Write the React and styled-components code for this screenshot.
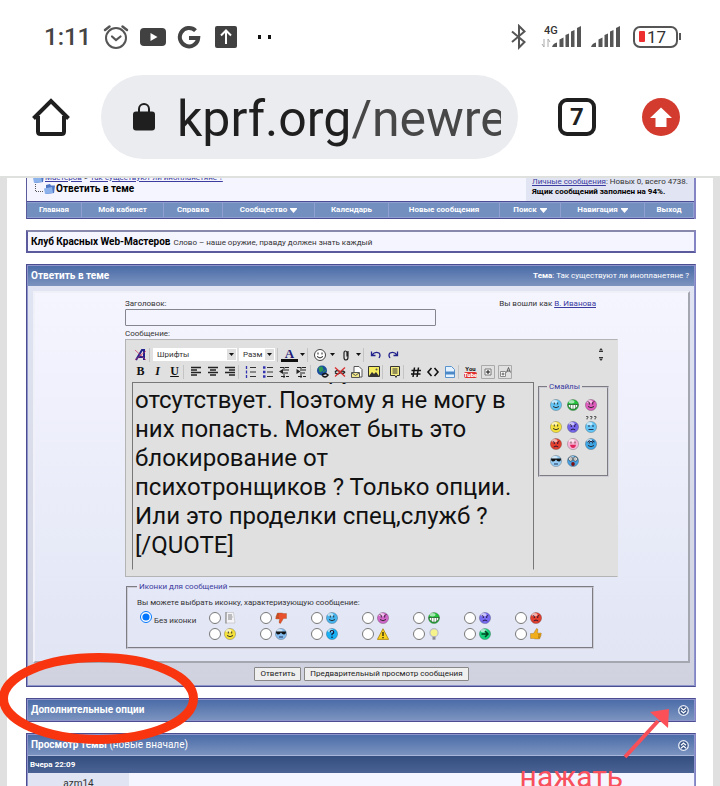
import React, { useEffect, useRef } from 'react';
import styled, { createGlobalStyle } from 'styled-components';

const smileys = [
    { color: '#62c4f4', face: 'smile' },
    { color: '#22c03a', face: 'grin' },
    { color: '#dd5cbc', face: 'evil' },
    { color: '#f4e03c', face: 'smile' },
    { color: '#7466ea', face: 'angry' },
    { color: '#62c4f4', face: 'flat', confused: true },
    { color: '#e2402f', face: 'angry' },
    { color: '#f7b4d6', face: 'laugh' },
    { color: '#3fa6e6', face: 'roll' },
    { color: '#94ccf4', face: 'cool' },
    { color: '#48a0e0', face: 'shock' },
];

const postIcons = [
    { id: 'note', icon: <NoteIcon /> },
    { id: 'down', icon: <ThumbIcon color="#e8502e" down /> },
    { id: 'smile', icon: <Smiley color="#48b4ee" face="wink" /> },
    { id: 'evil', icon: <Smiley color="#cf66c8" face="evil" /> },
    { id: 'grin', icon: <Smiley color="#22c03a" face="grin" /> },
    { id: 'sad', icon: <Smiley color="#786cf2" face="angry" /> },
    { id: 'angry', icon: <Smiley color="#e2402f" face="angry" /> },
    { id: 'yellow', icon: <Smiley color="#f4e03c" face="smile" /> },
    { id: 'cool', icon: <Smiley color="#84bcf0" face="cool" /> },
    { id: 'question', icon: <Smiley color="#18b0f4" face="question" /> },
    { id: 'warning', icon: <WarningIcon /> },
    { id: 'idea', icon: <BulbIcon /> },
    { id: 'arrow', icon: <Smiley color="#17d07c" face="arrow" /> },
    { id: 'up', icon: <ThumbIcon color="#f0ae1c" /> },
];

const navItems = [
    { label: 'Главная' },
    { label: 'Мой кабинет' },
    { label: 'Справка' },
    { label: 'Сообщество', menu: true },
    { label: 'Календарь' },
    { label: 'Новые сообщения' },
    { label: 'Поиск', menu: true },
    { label: 'Навигация', menu: true },
    { label: 'Выход' },
];

const message = [
    '\u00a0'.repeat(30) + 'друг',
    'отсутствует. Поэтому я не могу в',
    'них попасть. Может быть это',
    'блокирование от',
    'психотронщиков ? Только опции.',
    'Или это проделки спец,служб ?',
    '[/QUOTE]',
].join('\n');

const App = () => {
    return (
        <StyledScreen>
            <GlobalStyle />
            <StatusBar />
            <BrowserBar />
            <StyledPage>
                <Breadcrumbs />
                <StyledClubBox>
                    <strong>Клуб Красных Web-Мастеров</strong>
                    <span>Слово – наше оружие, правду должен знать каждый</span>
                </StyledClubBox>
                <ReplyForm />
                <StyledPanel>
                    <StyledPanelHeader>
                        <strong>Дополнительные опции</strong>
                        <StyledRoundButton type="button" aria-label="Развернуть">
                            <CollapseIcon />
                        </StyledRoundButton>
                    </StyledPanelHeader>
                </StyledPanel>
                <StyledPanel>
                    <StyledPanelHeader>
                        <span>
                            <strong>Просмотр темы</strong> (новые вначале)
                        </span>
                        <StyledRoundButton type="button" aria-label="Свернуть">
                            <CollapseIcon up />
                        </StyledRoundButton>
                    </StyledPanelHeader>
                    <StyledPostDate>Вчера 22:09</StyledPostDate>
                    <StyledPost>
                        <StyledPostAuthor>azm14</StyledPostAuthor>
                    </StyledPost>
                </StyledPanel>
            </StyledPage>
            <Annotations />
        </StyledScreen>
    );
};

export default App;

function StatusBar() {
    return (
        <StyledStatusBar>
            <StyledClock>1:11</StyledClock>
            <StyledStatusIcons>
                <svg width="26" height="26" viewBox="0 0 26 26" fill="none" stroke="#555" strokeLinecap="round">
                    <circle cx="13" cy="14" r="10" strokeWidth="2" />
                    <path d="M2 6 6.500 2.500M24 6 19.500 2.500" strokeWidth="2.500" />
                    <path d="M9 12.500 13 16l4.500-3.500" strokeWidth="2.200" />
                </svg>
                <svg width="28" height="20" viewBox="0 0 28 20">
                    <rect x="1" y="1" width="26" height="18" rx="4" fill="#414141" />
                    <path d="m11.500 6 7 4-7 4z" fill="#fff" />
                </svg>
                <svg width="24" height="24" viewBox="0 0 24 24" fill="none" stroke="#444" strokeWidth="4">
                    <path d="M18.500 5.600A9.200 9.200 0 1 0 21.200 13H12" />
                </svg>
                <StyledUploadIcon width="22" height="22" viewBox="0 0 22 22">
                    <rect width="22" height="22" rx="2" fill="#414141" />
                    <path d="M11 18V5M6 9.500 11 4.500l5 5" fill="none" stroke="#fff" strokeWidth="2" />
                </StyledUploadIcon>
                <svg width="16" height="6" viewBox="0 0 16 6">
                    <path d="M1 1h3v4H1zM11 1h3v4h-3z" fill="#111" />
                </svg>
            </StyledStatusIcons>
            <StyledStatusRight>
                <svg width="18" height="26" viewBox="0 0 18 26" fill="none" stroke="#555" strokeWidth="2">
                    <path d="m2 7.500 12.500 10.500L9 23.500V2l5.500 5.500L2 18" />
                </svg>
                <StyledNetwork>
                    <span>4G</span>
                    <svg width="10" height="12" viewBox="0 0 10 12">
                        <path d="M3 10V2M1 7l2 3M7 2v8M7 2l2 3" stroke="#aaa" fill="none" />
                    </svg>
                </StyledNetwork>
                <SignalIcon />
                <SignalIcon />
                <StyledBattery>17</StyledBattery>
            </StyledStatusRight>
        </StyledStatusBar>
    );
}

function SignalIcon() {
    return (
        <svg width="30" height="22" viewBox="0 0 30 22" fill="#555">
            <path d="M0 21c1-3 3-4 5-4.500V21zM7.500 13.500l4-2V21h-4zM13.500 9l3.500-1.500V21h-3.500zM19 5.500 22.500 4v17H19zM25 2l4-2v21h-4z" />
        </svg>
    );
}

function BrowserBar() {
    return (
        <StyledBrowserBar>
            <StyledBarButton type="button" aria-label="Домой">
                <svg width="38" height="38" viewBox="0 0 38 38" fill="none" stroke="#1f1f1f" strokeWidth="4">
                    <path d="M1.500 20.500 19 3l17.500 17.500M6 18v15.500q0 2.500 2.500 2.500h21q2.500 0 2.500-2.500V18" />
                </svg>
            </StyledBarButton>
            <StyledAddress type="button">
                <svg width="22" height="28" viewBox="0 0 22 28">
                    <path d="M6 10V6a5 5 0 0 1 10 0v4" fill="none" stroke="#1f1f1f" strokeWidth="2" />
                    <rect x="0" y="8.500" width="22" height="19" rx="3" fill="#1f1f1f" />
                </svg>
                <StyledUrl>
                    kprf.org<span>/newre</span>
                </StyledUrl>
            </StyledAddress>
            <StyledTabs type="button">7</StyledTabs>
            <StyledBarButton type="button" aria-label="Обновить">
                <svg width="38" height="38" viewBox="0 0 38 38">
                    <circle cx="19" cy="19" r="19" fill="#d33b2e" />
                    <path d="M19 9.500 30 20h-5.500v9h-11v-9H8z" fill="#fff" />
                </svg>
            </StyledBarButton>
        </StyledBrowserBar>
    );
}

function Breadcrumbs() {
    return (
        <StyledCrumbBox>
            <StyledCrumbRow>
                <StyledCrumbs>
                    <StyledCrumbLine>
                        <FolderIcon />
                        <span>
                            <a href="#masters">Мастеров</a> &gt; <a href="#thread">Так существуют ли инопланетяне ?</a>
                        </span>
                    </StyledCrumbLine>
                    <StyledCrumbLine $current>
                        <svg width="8" height="10" viewBox="0 0 8 10" fill="none" stroke="#555" strokeDasharray="1 1">
                            <path d="M.5 0v7.500H8" />
                        </svg>
                        <FolderIcon />
                        <strong>Ответить в теме</strong>
                    </StyledCrumbLine>
                </StyledCrumbs>
                <StyledInbox>
                    <div>
                        <a href="#pm">Личные сообщения</a>: Новых 0, всего 4738.
                    </div>
                    <strong>Ящик сообщений заполнен на 94%.</strong>
                </StyledInbox>
            </StyledCrumbRow>
            <StyledNav>
                {navItems.map((item) => (
                    <StyledNavLink key={item.label} href="#nav">
                        {item.label}
                        {item.menu && (
                            <svg width="7" height="5" viewBox="0 0 7 5">
                                <path d="M0 0h7v1L3.500 5 0 1z" fill="#fff" />
                            </svg>
                        )}
                    </StyledNavLink>
                ))}
            </StyledNav>
        </StyledCrumbBox>
    );
}

function ReplyForm() {
    return (
        <StyledPanel>
            <StyledPanelHeader>
                <strong>Ответить в теме</strong>
                <StyledTopic>
                    <b>Тема</b>: Так существуют ли инопланетяне ?
                </StyledTopic>
            </StyledPanelHeader>
            <StyledFormBody>
                <StyledFormInner>
                    <StyledLabelRow>
                        <label htmlFor="title">Заголовок:</label>
                        <span>
                            Вы вошли как <a href="#user">В. Иванова</a>
                        </span>
                    </StyledLabelRow>
                    <StyledTitleInput id="title" type="text" />
                    <StyledLabelRow>
                        <label htmlFor="message">Сообщение:</label>
                    </StyledLabelRow>
                    <Editor />
                    <StyledIconFieldset>
                        <legend>Иконки для сообщений</legend>
                        <div>Вы можете выбрать иконку, характеризующую сообщение:</div>
                        <StyledIconGrid>
                            <StyledNoIcon>
                                <StyledRadio type="radio" name="posticon" defaultChecked />
                                Без иконки
                            </StyledNoIcon>
                            {postIcons.map(({ id, icon }) => (
                                <StyledIconChoice key={id}>
                                    <StyledRadio type="radio" name="posticon" aria-label={id} />
                                    {icon}
                                </StyledIconChoice>
                            ))}
                        </StyledIconGrid>
                    </StyledIconFieldset>
                </StyledFormInner>
                <StyledActions>
                    <StyledButton type="button">Ответить</StyledButton>
                    <StyledButton type="button">Предварительный просмотр сообщения</StyledButton>
                </StyledActions>
            </StyledFormBody>
        </StyledPanel>
    );
}

function Editor() {
    const area = useRef(null);

    useEffect(() => {
        area.current.scrollTop = 26;
    }, []);

    return (
        <StyledEditor>
            <StyledTools>
                <Tool label="Убрать форматирование">
                    <path d="M2 12 8 2h2v10M4 9h6" stroke="#22228c" strokeWidth="2" />
                    <path d="m1 2 11 10M12 3 1 12" stroke="#d03060" strokeWidth=".7" />
                </Tool>
                <StyledSeparator />
                <StyledSelectBox $grow>
                    <select aria-label="Шрифты">
                        <option>Шрифты</option>
                    </select>
                    <StyledSelectArrow>
                        <Caret />
                    </StyledSelectArrow>
                </StyledSelectBox>
                <StyledSelectBox>
                    <select aria-label="Размер">
                        <option>Разм</option>
                    </select>
                    <StyledSelectArrow>
                        <Caret />
                    </StyledSelectArrow>
                </StyledSelectBox>
                <StyledSeparator />
                <StyledColorTool type="button">A</StyledColorTool>
                <StyledCaretTool type="button" aria-label="Цвет">
                    <Caret />
                </StyledCaretTool>
                <StyledSeparator />
                <Tool label="Смайлы">
                    <circle cx="7" cy="7" r="5.500" fill="#fff" stroke="#444" />
                    <path d="M5 4.500v2M9 4.500v2M4 8.500q3 3 6 0" stroke="#222" />
                </Tool>
                <StyledCaretTool type="button" aria-label="Выбрать смайл">
                    <Caret />
                </StyledCaretTool>
                <Tool label="Вложение">
                    <path d="M9 3v6q0 3-2 3t-2-2.500V5q0-2 1.500-2T8 5v3.500" stroke="#222" strokeWidth="1.200" />
                </Tool>
                <StyledCaretTool type="button" aria-label="Выбрать вложение">
                    <Caret />
                </StyledCaretTool>
                <StyledSeparator />
                <Tool label="Отменить">
                    <path d="M2.500 3.500v4h4M3 7q3-4 7-2 2 2 0 5" stroke="#22228c" strokeWidth="1.300" />
                </Tool>
                <Tool label="Повторить">
                    <path d="M11.500 3.500v4h-4M11 7Q8 3 4 5q-2 2 0 5" stroke="#22228c" strokeWidth="1.300" />
                </Tool>
                <StyledResize type="button" aria-label="Размер поля">
                    <svg width="6" height="14" viewBox="0 0 6 14" fill="#333">
                        <path d="m3 0 2 2.500H1zM1 3h4v1H1zM1 9h4v1H1zM1 10.500h4L3 13z" />
                    </svg>
                </StyledResize>
            </StyledTools>
            <StyledTools>
                <StyledTextTool type="button">
                    <b>B</b>
                </StyledTextTool>
                <StyledTextTool type="button">
                    <i>I</i>
                </StyledTextTool>
                <StyledTextTool type="button">
                    <u>U</u>
                </StyledTextTool>
                <StyledSeparator />
                <Tool label="По левому краю">
                    <path d="M2 2.500h10M2 5h6M2 7.500h10M2 10h6" stroke="#222" strokeWidth="1.300" />
                </Tool>
                <Tool label="По центру">
                    <path d="M2 2.500h10M4 5h6M2 7.500h10M4 10h6" stroke="#222" strokeWidth="1.300" />
                </Tool>
                <Tool label="По правому краю">
                    <path d="M2 2.500h10M6 5h6M2 7.500h10M6 10h6" stroke="#222" strokeWidth="1.300" />
                </Tool>
                <StyledSeparator />
                <Tool label="Нумерованный список">
                    <path d="M2.500 1v3M2.500 5.500v3M2.500 10v3" stroke="#3333b0" strokeWidth="1.300" />
                    <path d="M6 2.500h6M6 7h6M6 11.500h6" stroke="#333" />
                </Tool>
                <Tool label="Список">
                    <path d="M2 2.500h2.500M2 7h2.500M2 11.500h2.500" stroke="#3333b0" strokeWidth="2.500" />
                    <path d="M6 2.500h6M6 7h6M6 11.500h6" stroke="#333" />
                </Tool>
                <Tool label="Уменьшить отступ">
                    <path d="M2 2.500h10M7 5h5M7 8h3M3 11.500h8M6 2v11" stroke="#222" strokeDasharray="4 1" />
                    <path d="M5 4v5L1 6.500z" fill="#222" />
                </Tool>
                <Tool label="Увеличить отступ">
                    <path d="M2 2.500h10M7 5h5M7 8h3M3 11.500h8M6 2v11" stroke="#222" strokeDasharray="4 1" />
                    <path d="M1.500 4v5l4-2.500z" fill="#222" />
                </Tool>
                <StyledSeparator />
                <Tool label="Ссылка">
                    <circle cx="6" cy="5.500" r="5" fill="#1c4f9c" />
                    <path d="M3 2.500 6 2l1 3-3 2zM7 7l3-2" fill="#2f9c50" stroke="#2f9c50" />
                    <path d="M6 10q3-3 6 0-3 4-6 0" stroke="#111" strokeWidth="1.500" />
                </Tool>
                <Tool label="Убрать ссылку">
                    <path d="M2 7q2.500-3 5 0t5 0M2 7.500q2.500 3 5 0t5 0" stroke="#222" strokeWidth="1.300" />
                    <path d="m2 2.500 10 9M12 2.500l-10 9" stroke="#d83030" strokeWidth="1.300" />
                </Tool>
                <Tool label="Почта">
                    <path d="M4 1.500h5l3 3V12H4z" fill="#fff" stroke="#555" />
                    <path d="M1.500 7.500h8v5h-8z" fill="#f1e88a" stroke="#555" />
                    <path d="m2 8 3.500 2.500L9 8" stroke="#555" />
                </Tool>
                <Tool label="Картинка">
                    <path d="M1.500 1.500h11v10h-11z" fill="#f5ec60" stroke="#333" />
                    <path d="m2 11 3-4 2 2 2-2 3 4z" fill="#333" />
                    <circle cx="9.500" cy="4.500" r="1" fill="#555" />
                </Tool>
                <StyledSeparator />
                <Tool label="Цитата">
                    <path d="M2.500 1.500h9v9H9l-1 2-1-2H2.500z" fill="#f5ec80" stroke="#333" />
                    <path d="M4.500 4h5M4.500 6h5M4.500 8h5" stroke="#333" />
                </Tool>
                <StyledSeparator />
                <Tool label="Код">
                    <path d="M5.500 2.500 4 12M9.500 2.500 8 12M2.500 5.500H12M2 9h9.500" stroke="#111" strokeWidth="1.500" />
                </Tool>
                <Tool label="HTML">
                    <path d="M5.500 3 2 7l3.500 4M8.500 3 12 7l-3.500 4" stroke="#111" strokeWidth="1.600" />
                </Tool>
                <Tool label="PHP">
                    <path d="M2.500 1.500h6l3 3v8h-9z" fill="#e4f2ff" stroke="#5b93cc" />
                    <path d="M2 6.500h10v3H2z" fill="#4a88c8" />
                </Tool>
                <StyledSeparator />
                <StyledYoutube type="button">
                    <span>You</span>
                    <b>Tube</b>
                </StyledYoutube>
                <Tool label="Плюс">
                    <path d="M.5.5h13v13H.5z" stroke="#aaa" />
                    <path d="M4 4h6v6H4z" fill="#fff" stroke="#777" />
                    <path d="M5 7h4M7 5v4" stroke="#111" />
                </Tool>
                <Tool label="Плюс A">
                    <path d="M.5.5h13v13H.5z" stroke="#aaa" />
                    <path d="M2.500 6.500h5v5h-5z" fill="#fff" stroke="#888" />
                    <path d="M3.500 9h3M5 7.500v3M8.500 7.500l2-5 2 5M9 6h3" stroke="#444" strokeWidth=".8" />
                </Tool>
            </StyledTools>
            <StyledEditorMain>
                <StyledTextarea id="message" ref={area} defaultValue={message} spellCheck={false} />
                <StyledSmileFieldset>
                    <legend>Смайлы</legend>
                    <StyledSmileGrid>
                        {smileys.map((smiley, i) => (
                            <Smiley key={i} {...smiley} />
                        ))}
                    </StyledSmileGrid>
                </StyledSmileFieldset>
            </StyledEditorMain>
        </StyledEditor>
    );
}

function Tool({ label, children }) {
    return (
        <StyledTool type="button" aria-label={label}>
            <svg width="14" height="14" viewBox="0 0 14 14" fill="none">
                {children}
            </svg>
        </StyledTool>
    );
}

function Caret() {
    return (
        <svg width="5" height="3" viewBox="0 0 5 3">
            <path d="M0 0h5L2.500 3z" fill="#111" />
        </svg>
    );
}

function Smiley({ color, face, confused }) {
    const top = confused ? 5 : 0;
    return (
        <svg width="12" height={12 + top} viewBox={`0 ${-top} 12 ${12 + top}`} fill="none">
            {confused && (
                <path
                    d="M1-4.500h2V-3H2v1.500M5-4.500h2V-3H6v1.500M9-4.500h2V-3h-1v1.500"
                    stroke="#444"
                    strokeWidth=".8"
                />
            )}
            <circle cx="6" cy="6" r="5.600" fill={color} stroke="#000" strokeOpacity=".3" strokeWidth=".7" />
            <ellipse cx="4.500" cy="2.800" rx="3" ry="1.700" fill="#fff" opacity=".6" />
            {['smile', 'evil', 'wink', 'roll'].includes(face) && (
                <path d="M4.300 3.500v2M7.700 3.500v2M3 7.500q3 2.500 6 0" stroke="#222" strokeWidth=".9" />
            )}
            {face === 'evil' && <path d="m2.500 2.500 2 1M9.500 2.500l-2 1" stroke="#40103a" strokeWidth=".8" />}
            {face === 'roll' && <path d="M2.500 4q2-2.500 3.500 0 1.500-2.500 3.500 0" stroke="#113" />}
            {face === 'grin' && (
                <>
                    <path
                        d="M1 5.500h10C10.500 9 8 10.300 6 10.300S1.500 9 1 5.500z"
                        fill="#fff"
                        stroke="#0a4a14"
                        strokeWidth=".7"
                    />
                    <path d="M3.500 6v3M6 6v4M8.500 6v3" stroke="#0a4a14" strokeWidth=".5" />
                </>
            )}
            {face === 'angry' && (
                <path
                    d="m2.800 3.500 2 1M9.200 3.500l-2 1M4.300 5v1M7.700 5v1M3.700 9q2.300-2 4.600 0"
                    stroke="#1c1030"
                    strokeWidth=".9"
                />
            )}
            {face === 'flat' && <path d="M4 4v2M8 4v2M3.500 8.500h5" stroke="#235" />}
            {face === 'laugh' && (
                <>
                    <path d="M4 3.500v2M8 3.500v2" stroke="#522" strokeWidth=".8" />
                    <path d="M3 6.800h6C8.500 9 7.500 10 6 10S3.500 9 3 6.800z" fill="#e0245c" />
                </>
            )}
            {face === 'cool' && (
                <>
                    <path d="M1 3.500h10q0 3-2 3T6 4.500q-1 2-3 2T1 3.500z" fill="#111" />
                    <path d="M4 9h4" stroke="#235" />
                </>
            )}
            {face === 'shock' && (
                <>
                    <ellipse cx="6" cy="9" rx="1.800" ry="2" fill="#7c1010" />
                    <circle cx="3.700" cy="4" r="2.100" fill="#fff" stroke="#222" strokeWidth=".6" />
                    <circle cx="8.300" cy="4" r="2.100" fill="#fff" stroke="#222" strokeWidth=".6" />
                    <path d="M4 3.500v1M8 3.500v1" stroke="#111" />
                </>
            )}
            {face === 'question' && (
                <path d="M4.300 4.500q0-2 1.700-2t1.700 1.700Q7.700 5.500 6 6v1.200M6 8.500V10" stroke="#113" strokeWidth="1.200" />
            )}
            {face === 'arrow' && <path d="M2.500 6H9M6 3l3 3-3 3" stroke="#042" strokeWidth="1.500" />}
        </svg>
    );
}

function NoteIcon() {
    return (
        <svg width="12" height="12" viewBox="0 0 12 12" fill="none">
            <path d="M2 .5h7.500L11 11H1.500z" fill="#f4f4f8" stroke="#bbb" strokeWidth=".6" />
            <path d="M2 0v11.500M4 3h4M4 5h4.500M4 7h4" stroke="#777" strokeWidth=".9" />
        </svg>
    );
}

function ThumbIcon({ color, down }) {
    return (
        <svg width="12" height="12" viewBox="0 0 12 12">
            <g transform={down ? 'rotate(180 6 6)' : undefined}>
                <path
                    d="M.5 5.500h3L6.500.5q2 0 1.300 2.500L7.300 5H11q1 .8 0 1.700.4.800-.4 1.500.3.900-.5 1.400 0 1.400-1 1.400H5L3.500 10.500h-3z"
                    fill={color}
                    stroke="#7c4a10"
                    strokeOpacity=".6"
                    strokeWidth=".5"
                />
                <path d="M8 6.700h2.500M8 8.200h2.300M8 9.700h2" stroke="#7c4a10" strokeWidth=".5" />
            </g>
        </svg>
    );
}

function WarningIcon() {
    return (
        <svg width="12" height="12" viewBox="0 0 12 12">
            <path d="M6 .7 11.600 11.400H.4z" fill="#f8d21c" stroke="#a8820c" strokeWidth=".8" strokeLinejoin="round" />
            <path d="M6 4v4M6 9v1.200" stroke="#111" strokeWidth="1.200" />
        </svg>
    );
}

function BulbIcon() {
    return (
        <svg width="12" height="12" viewBox="0 0 12 12">
            <circle cx="6" cy="4.700" r="4.100" fill="#f6f28c" stroke="#b9bccc" strokeWidth="1.200" />
            <path d="M4.500 8.700h3v3h-3z" fill="#8c8c96" />
        </svg>
    );
}

function FolderIcon() {
    return (
        <svg width="11" height="10" viewBox="0 0 11 10">
            <path d="m2 1 4-1 1 1.500H11L10 9 2 10z" fill="#4e76c4" />
            <path d="M0 4.500 8 3l1 6-8 1z" fill="#8cb2ec" />
        </svg>
    );
}

function CollapseIcon({ up }) {
    return (
        <svg width="11" height="11" viewBox="0 0 11 11" fill="none">
            <circle cx="5.500" cy="5.500" r="4.800" fill="#3b5688" stroke="#e6ecf8" strokeWidth="1.300" />
            <path
                d={up ? 'M3 5.300 5.500 3 8 5.300M3 8.300 5.500 6 8 8.300' : 'm3 2.700 2.500 2.300L8 2.700M3 5.700 5.500 8 8 5.700'}
                stroke="#fff"
                strokeWidth="1.200"
            />
        </svg>
    );
}

// Hand-drawn marks that lie over the page
function Annotations() {
    return (
        <>
            <StyledCircleMark width="200" height="94" viewBox="0 0 200 94">
                <ellipse cx="98.500" cy="46.500" rx="95" ry="41" fill="none" stroke="#f8350f" strokeWidth="9" />
            </StyledCircleMark>
            <StyledArrowMark width="50" height="52" viewBox="0 0 50 52">
                <path d="M3 50 36 14" stroke="#f85058" strokeWidth="4" />
                <path d="M47 2 46 21 28 5z" fill="#fb5058" />
            </StyledArrowMark>
            <StyledPressText>нажать</StyledPressText>
        </>
    );
}

// Styled Components

const GlobalStyle = createGlobalStyle`
    * {
        box-sizing: border-box;
    }

    body {
        margin: 0;
        background-color: #fff;
        font-family: Roboto, 'Liberation Sans', sans-serif;
    }

    button, input, select, textarea {
        margin: 0;
        font-family: inherit;
    }

    svg {
        display: block;
        flex-shrink: 0;
    }
`;

const StyledScreen = styled.div`
    position: relative;
    display: flex;
    flex-direction: column;
    height: 100vh;
    overflow: hidden;
`;

const StyledStatusBar = styled.div`
    display: flex;
    align-items: center;
    flex-shrink: 0;
    height: 75px;
    padding: 0 42px 2px 44px;
`;

const StyledClock = styled.span`
    margin-right: 12px;
    color: #444;
    font-size: 24px;
    font-weight: 500;
    line-height: 30px;
`;

const StyledStatusIcons = styled.div`
    display: flex;
    align-items: center;
    gap: 10px;

    svg:last-child {
        margin-left: 10px;
    }
`;

const StyledUploadIcon = styled.svg`
    margin-left: 4px;
`;

const StyledStatusRight = styled.div`
    display: flex;
    align-items: center;
    gap: 9px;
    margin-left: auto;
`;

const StyledNetwork = styled.div`
    display: flex;
    flex-direction: column;
    width: 10px;
    margin: 0 -8px 0 4px;
    color: #333;
    font-size: 11px;
    font-weight: 500;
    line-height: 12px;

    span {
        margin-left: 3px;
    }
`;

const StyledBattery = styled.div`
    position: relative;
    width: 45px;
    margin-left: 3px;
    padding-left: 12px;
    border: 2px solid #555;
    border-radius: 7px;
    color: #333;
    font-size: 17px;
    line-height: 18px;

    &::before {
        content: '';
        position: absolute;
        left: 4px;
        top: 3px;
        width: 6px;
        height: 11px;
        border-radius: 1px;
        background-color: #ee2f2f;
    }

    &::after {
        content: '';
        position: absolute;
        right: -5px;
        top: 5px;
        width: 2px;
        height: 7px;
        background-color: #555;
    }
`;

const StyledBrowserBar = styled.div`
    display: flex;
    align-items: center;
    flex-shrink: 0;
    padding: 0 40px 17px 32px;
    border-bottom: 2px solid #dfe1df;
`;

const StyledBarButton = styled.button`
    padding: 0;
    border: none;
    background: none;
`;

const StyledAddress = styled.button`
    display: flex;
    align-items: center;
    flex: 1;
    gap: 22px;
    min-width: 0;
    height: 84px;
    margin: 0 40px 0 31px;
    padding: 0 17px 0 32px;
    border: none;
    border-radius: 42px;
    background-color: #ebecf0;
`;

const StyledUrl = styled.span`
    flex: 1;
    min-width: 0;
    padding-top: 4px;
    overflow: hidden;
    color: #1f1f1f;
    font-size: 50px;
    line-height: 66px;
    text-align: left;
    white-space: nowrap;

    span {
        color: #474747;
    }
`;

const StyledTabs = styled.button`
    width: 38px;
    height: 38px;
    margin-right: 46px;
    padding: 0;
    border: 4px solid #1f1f1f;
    border-radius: 9px;
    background: none;
    color: #1f1f1f;
    font-size: 24px;
    font-weight: 700;
    line-height: 30px;
`;

const StyledPage = styled.div`
    display: flex;
    flex: 1;
    flex-direction: column;
    gap: 11px;
    min-height: 0;
    padding: 0 17px 0 19px;
    border: solid #e0e0e0;
    border-width: 0 7px;
    overflow: hidden;
    color: #333;
    font-size: 8px;
    line-height: 10px;

    > * {
        flex-shrink: 0;
    }

    a {
        color: #3b3ba0;
    }
`;

const StyledCrumbBox = styled.div`
    border: solid #5a5a9c;
    border-width: 0 1px;
    border-right: 2px solid #8484c4;
    background-color: #f5f5ff;
`;

const StyledCrumbRow = styled.div`
    display: flex;
    align-items: flex-end;
    justify-content: space-between;
    height: 23px;
`;

const StyledCrumbs = styled.div`
    padding: 0 0 7px 6px;
`;

const StyledCrumbLine = styled.div`
    display: flex;
    align-items: center;
    gap: 1px;
    padding-left: ${({ $current }) => ($current ? '2px' : '0')};
    line-height: 11px;

    strong {
        color: #000;
        font-size: 10px;
    }
`;

const StyledInbox = styled.div`
    width: 168px;
    padding: 0 5px 4px 6px;
    background-color: #e1e4f2;
    white-space: nowrap;

    strong {
        color: #000;
    }
`;

const StyledNav = styled.nav`
    display: grid;
    grid-template-columns: 55fr 82fr 59fr 92fr 74fr 111fr 61fr 84fr 49fr;
    border: solid #4c4c94;
    border-width: 1px 0;
    background-color: #738fbf;
`;

const StyledNavLink = styled.a`
    display: flex;
    align-items: center;
    justify-content: center;
    gap: 3px;
    border: solid #8fa0d0;
    border-width: 1px 1px 1px 0;
    font-weight: 700;
    line-height: 14px;
    text-decoration: none;
    white-space: nowrap;

    ${StyledNav} & {
        color: #fff;
    }
`;

const StyledClubBox = styled.div`
    display: flex;
    align-items: baseline;
    gap: 3px;
    height: 23px;
    padding: 3px;
    border: 2px solid #5a5a9c;
    border-top-color: #8888ac;
    border-right-color: #8484c4;
    background-color: #f5f5ff;
    line-height: 13px;

    strong {
        color: #000;
        font-size: 10px;
    }
`;

const StyledPanel = styled.section`
    padding: 1px;
    border: 1px solid #4c4c90;
    border-right-color: #8484c4;
    background-color: #8e94cc;
`;

const StyledPanelHeader = styled.header`
    display: flex;
    align-items: center;
    justify-content: space-between;
    height: 20px;
    padding: 0 5px 0 3px;
    background-image: linear-gradient(#4b6ca8, #7b93bf);
    color: #fff;
    font-size: 10px;
`;

const StyledTopic = styled.span`
    font-size: 8px;
`;

const StyledRoundButton = styled.button`
    padding: 0;
    border: none;
    background: none;
`;

const StyledFormBody = styled.div`
    padding: 5px 4px 0 5px;
    background-image: linear-gradient(#e1e4f2, #d0d2e0);
`;

const StyledFormInner = styled.div`
    padding: 6px 70px 12px 90px;
    border: 2px solid #f0f0f8;
    border-right-color: #a4a6b0;
    border-bottom-color: #a4a6b0;
    background-image: linear-gradient(#f5f5ff, #e1e5f4);
`;

const StyledLabelRow = styled.div`
    display: flex;
    justify-content: space-between;
    padding-right: 22px;
`;

const StyledTitleInput = styled.input`
    display: block;
    width: 63%;
    height: 17px;
    margin-bottom: 3px;
    padding: 2px;
    border: 1px solid #85858f;
    border-radius: 1px;
    background-color: transparent;
    font-size: 8px;
`;

const StyledEditor = styled.div`
    margin-bottom: 5px;
    padding: 6px 8px 6px 6px;
    border: 1px solid #b4b4b4;
    border-right-color: #e0e0e0;
    background-color: #e0e0e0;
`;

const StyledTools = styled.div`
    display: flex;
    align-items: center;
    height: 17px;
`;

const StyledTool = styled.button`
    display: flex;
    align-items: center;
    justify-content: center;
    width: 17px;
    height: 17px;
    padding: 0;
    border: none;
    background: none;
    color: #111;
`;

const StyledTextTool = styled(StyledTool)`
    font-family: 'Liberation Serif', serif;
    font-size: 12px;
    font-weight: 700;
`;

const StyledColorTool = styled(StyledTool)`
    height: 14px;
    border-bottom: 3px solid #111;
    color: #1c1c78;
    font-family: 'Liberation Serif', serif;
    font-size: 13px;
    font-weight: 700;
    line-height: 11px;
`;

const StyledCaretTool = styled(StyledTool)`
    width: 9px;
`;

const StyledYoutube = styled(StyledTool)`
    flex-direction: column;
    font-size: 6px;
    font-weight: 700;
    line-height: 6px;

    b {
        border-radius: 2px;
        background-color: #e02f2f;
        color: #fff;
    }
`;

const StyledResize = styled(StyledTool)`
    margin-left: auto;
`;

const StyledSeparator = styled.span`
    width: 4px;
    height: 14px;
    border-left: 1px solid #c4c4c4;
`;

const StyledSelectBox = styled.span`
    display: flex;
    align-items: center;
    width: ${({ $grow }) => ($grow ? '84px' : '36px')};
    margin-right: 2px;
    background-color: #fff;

    select {
        flex: 1;
        min-width: 0;
        height: 13px;
        padding: 0 0 0 4px;
        border: none;
        background: none;
        color: #333;
        font-size: 8px;
        appearance: none;
    }
`;

const StyledSelectArrow = styled.span`
    display: flex;
    align-items: center;
    align-self: stretch;
    justify-content: center;
    width: 9px;
    margin: 1px;
    background-color: #e0e0e0;
`;

const StyledEditorMain = styled.div`
    display: flex;
    align-items: flex-start;
    gap: 4px;
    margin-top: 2px;
`;

const StyledTextarea = styled.textarea`
    flex: 1;
    min-width: 0;
    height: 188px;
    padding: 0 0 16px 2px;
    border: 1px solid #777;
    border-bottom-color: #e0e0e0;
    background: none;
    color: #111;
    font-size: 24px;
    line-height: 29px;
    overflow: hidden;
    resize: none;
`;

const StyledFieldset = styled.fieldset`
    margin: 0;
    min-width: 0;
    border: 2px groove #cccdd6;

    legend {
        padding: 0 2px;
        color: #3b3ba0;
    }
`;

const StyledSmileFieldset = styled(StyledFieldset)`
    width: 71px;
    padding: 7px 7px 8px;
`;

const StyledSmileGrid = styled.div`
    display: grid;
    grid-template-columns: repeat(3, 1fr);
    align-items: end;
    justify-items: center;
    row-gap: 5px;
`;

const StyledIconFieldset = styled(StyledFieldset)`
    margin: 0 24px 0 1px;
    padding: 6px 9px 5px;
`;

const StyledIconGrid = styled.div`
    display: grid;
    grid-template-columns: 72px repeat(7, 51px);
    grid-auto-rows: 16px;
    margin-top: 2px;
`;

const StyledNoIcon = styled.label`
    display: flex;
    grid-row: span 2;
    align-items: flex-start;
    gap: 2px;
    padding: 1px 0 0 3px;
    line-height: 20px;
`;

const StyledIconChoice = styled.label`
    display: flex;
    align-items: center;
    gap: 3px;
`;

const StyledRadio = styled.input`
    width: 12px;
    height: 12px;
    accent-color: #0075ff;
`;

const StyledActions = styled.div`
    display: flex;
    justify-content: center;
    gap: 3px;
    padding: 4px 0;
`;

const StyledButton = styled.button`
    height: 14px;
    padding: 0 5px;
    border: 1px solid #888;
    border-radius: 1px;
    background-color: #efefef;
    color: #222;
    font-size: 8px;
    line-height: 12px;
`;

const StyledPostDate = styled.div`
    padding: 0 2px;
    border-top: 1px solid #a9b6dc;
    background-image: linear-gradient(#344e80, #4a6394);
    color: #fff;
    font-weight: 700;
    line-height: 17px;
`;

const StyledPost = styled.div`
    display: flex;
    background-color: #f5f5ff;
`;

const StyledPostAuthor = styled.div`
    width: 101px;
    padding: 4px;
    background-color: #e1e4f2;
    font-size: 10px;
    line-height: 14px;
    text-align: center;
`;

const StyledCircleMark = styled.svg`
    position: absolute;
    left: 0;
    top: 652px;
`;

const StyledArrowMark = styled.svg`
    position: absolute;
    right: 48px;
    top: 707px;
`;

const StyledPressText = styled.span`
    position: absolute;
    right: 97px;
    top: 759px;
    color: #f8505c;
    font-size: 30px;
    line-height: 36px;
`;
